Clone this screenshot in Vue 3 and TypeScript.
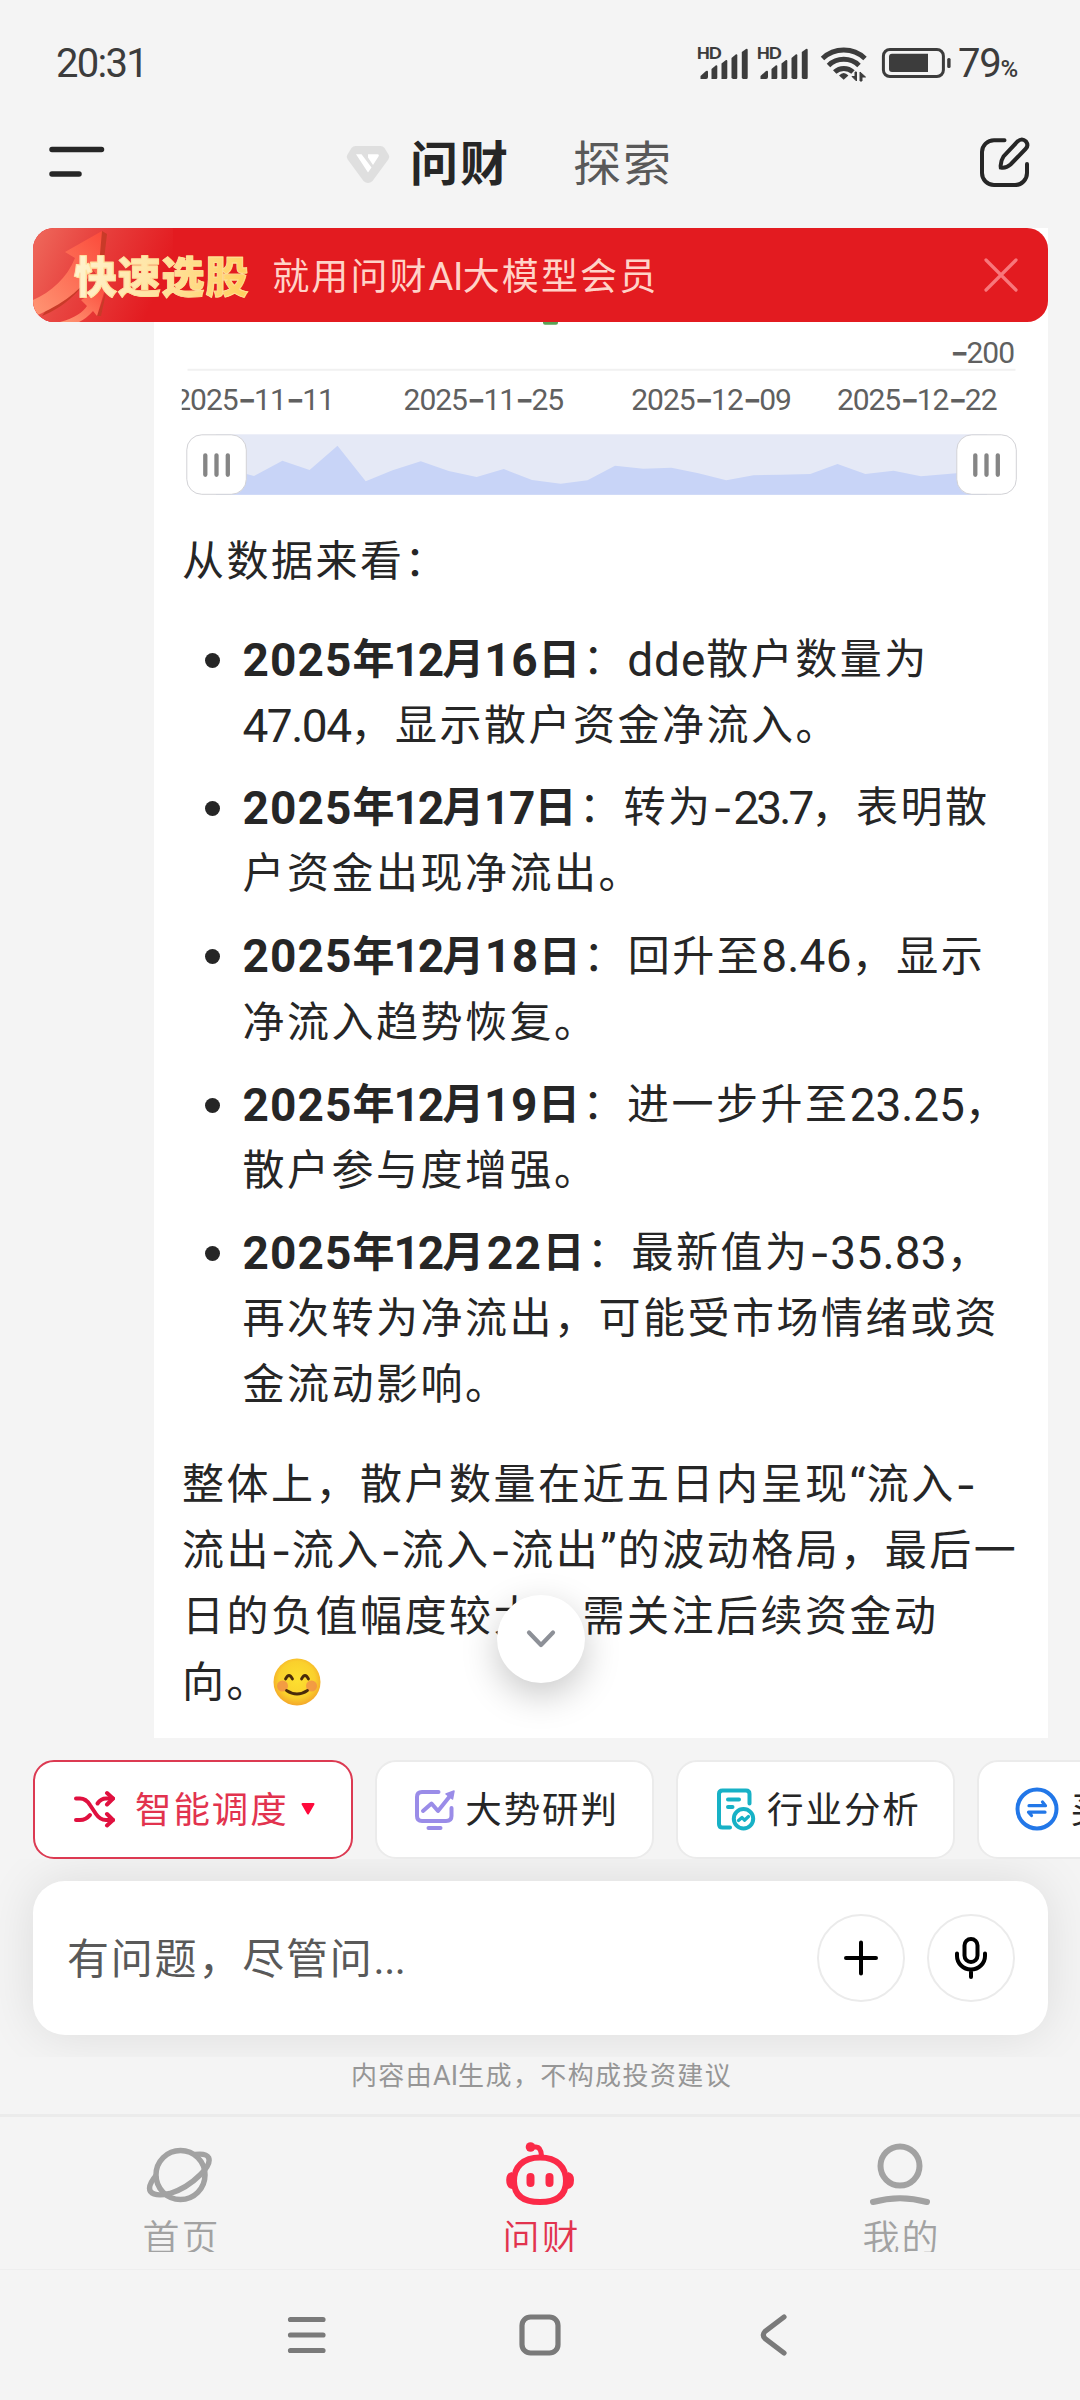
<script setup lang="ts">
type Kind = 'cjk' | 'lat' | 'dash' | 'quote'
interface Run { text: string; kind: Kind; spacing?: string; shift?: string }
interface Line { bold?: string; text: string }
interface Chip { label: string; icon: string; active?: boolean }

// Tracking and leading offset of individual latin runs, in px
const tracking: Record<string, [number, number]> = {
  '2025': [1.1, 0], '12': [-2, -3.6], '16': [0.6, -2.5], '17': [-1, -3], '18': [0.6, -2], '19': [0.6, -2.6], '22': [1.5, 0],
  '47.04': [-1.5, 0], '23.7': [-2.9, 0], '8.46': [0.2, 0], '23.25': [-0.1, 0], '35.83': [0.2, 0], dde: [0.9, 0],
}

function runs(source: string): Run[] {
  const parts = source.match(/[“”]|-|[0-9A-Za-z.]+|[^“”\-0-9A-Za-z.]+/g) ?? []
  return parts.map((text): Run => {
    if (text === '-') return { text, kind: 'dash' }
    if (text === '“' || text === '”') return { text, kind: 'quote' }
    if (/^[0-9A-Za-z.]+$/.test(text)) {
      const [spacing, shift] = tracking[text] ?? [0, 0]
      return { text, kind: 'lat', spacing: `${spacing}px`, shift: `${shift}px` }
    }
    return { text, kind: 'cjk' }
  })
}

const items: Line[][] = [
  [{ bold: '2025年12月16日', text: '：dde散户数量为' }, { text: '47.04，显示散户资金净流入。' }],
  [{ bold: '2025年12月17日', text: '：转为-23.7，表明散' }, { text: '户资金出现净流出。' }],
  [{ bold: '2025年12月18日', text: '：回升至8.46，显示' }, { text: '净流入趋势恢复。' }],
  [{ bold: '2025年12月19日', text: '：进一步升至23.25，' }, { text: '散户参与度增强。' }],
  [{ bold: '2025年12月22日', text: '：最新值为-35.83，' }, { text: '再次转为净流出，可能受市场情绪或资' }, { text: '金流动影响。' }],
]
const summary: string[] = [
  '整体上，散户数量在近五日内呈现“流入-',
  '流出-流入-流入-流出”的波动格局，最后一',
  '日的负值幅度较大，需关注后续资金动',
]

const dates = [
  { x: 20.3, parts: ['2025', '11', '11'] },
  { x: 249.6, parts: ['2025', '11', '25'] },
  { x: 477.3, parts: ['2025', '12', '09'] },
  { x: 682.9, parts: ['2025', '12', '22'] },
]
const trend: [number, number][] = [
  [62, 492], [92.5, 474], [100, 476], [128.4, 460.7], [155.6, 470], [183.5, 445.7], [211.7, 481.3], [238.6, 470.3],
  [266.8, 461.3], [294.7, 471], [322.6, 477], [349.8, 469], [378, 480], [406.7, 483.7], [433.5, 480.3], [461, 465.7],
  [489.3, 468.7], [517.5, 467.7], [544.4, 473.3], [572.3, 480.3], [599.5, 475.3], [627, 474.7], [656.3, 474],
  [683.5, 464], [711.4, 474], [739.6, 470.7], [766.9, 476.3], [802.3, 473.3], [833, 471],
]
const area = `62,266.7 ${trend.map(([x, y]) => `${x},${(y - 228).toFixed(1)}`).join(' ')} 833,266.7`

const chips: Chip[] = [
  { label: '智能调度', icon: 'shuffle', active: true },
  { label: '大势研判', icon: 'board' },
  { label: '行业分析', icon: 'report' },
  { label: '买', icon: 'swap' },
]
const signals = [0, 60]
</script>

<template>
  <div class="screen" lang="zh-CN">
    <header class="status">
      <span class="clock">20:31</span>
      <svg class="sys" width="256" height="44" viewBox="696 42 256 44" fill="#3c3c3c">
        <g v-for="dx in signals" :key="dx" :transform="`translate(${dx} 0)`">
          <text class="hd" x="696.8" y="59.3" textLength="25">HD</text>
          <path d="M700.5 79V76L706 71Q708 70 708 72V77Q708 79 706 79Z" />
          <path d="M711.5 79V69L716 65.200Q717.300 65 717.300 66.500V77.500Q717.300 79 716 79Z" />
          <path d="M721.500 79V63.500L726 60Q727.300 59.700 727.300 61V77.500Q727.300 79 726 79H723Z" />
          <path d="M731.500 78V58L736 54.200Q737.300 54 737.300 55.200V77.500Q737.300 79 736 79H733Z" />
          <path d="M741.800 78V52L746 48.900Q747.700 48.500 747.700 50V77.500Q747.700 79 746.500 79H743Z" />
        </g>
        <g fill="none" stroke="#3c3c3c" stroke-width="5">
          <path d="M822.500 58.500A31 31 0 0 1 865 58.500" />
          <path d="M828.500 65.500A22 22 0 0 1 859 65.500" />
          <path d="M834.700 72A13.500 13.500 0 0 1 853 72" />
        </g>
        <path d="M843.700 79.800L839 75.500Q843.700 70.500 848.400 75.500Z" />
        <path d="M856.500 72V81L852 76.500H855V72ZM860 81V72L865.500 77H862V81Z" stroke="#3c3c3c" />
        <rect x="883.400" y="49.500" width="60" height="27" rx="6.500" fill="none" stroke="#3c3c3c" stroke-width="3" />
        <path d="M892 53.700H928V72H892Q889 72 889 69V56.700Q889 53.700 892 53.700Z" />
        <rect x="947.200" y="58" width="3.400" height="10" rx="1.500" />
      </svg>
      <span class="level">79<small>%</small></span>
    </header>

    <nav class="top">
      <svg class="menu" width="56" height="32" viewBox="0 0 56 32" stroke="#262626" stroke-width="5.500" stroke-linecap="round"><path d="M3 3.500H52.500M3 28H30" /></svg>
      <div class="titles">
        <svg width="44" height="40" viewBox="0 0 44 40">
          <path d="M9.500 2H34.500Q37 2 38.500 4L42.500 10.500Q44 13 42.300 15.500L26.500 37Q22 41 17.500 37L1.700 15.500Q0 13 1.500 10.500L5.500 4Q7 2 9.500 2Z" fill="#dfdfdf" />
          <path d="M10 10.200H15.500L25.500 23.500L22 28.500ZM22 10.200H31.500Q33.500 10.200 32.500 12.500L27 21L22 13.500Z" fill="#fff" />
        </svg>
        <b>问财</b><span>探索</span>
      </div>
      <svg class="edit" width="52" height="52" viewBox="0 0 52 52" fill="none" stroke="#262626" stroke-width="4" stroke-linecap="round">
        <path d="M25.500 4.200H15A12 12 0 0 0 3 16V37A12 12 0 0 0 15 49H36A12 12 0 0 0 48 37V28" />
        <path d="M38.500 5.500Q43 1.500 47 5.500Q50 9.500 46.500 13L31.500 28.500Q27 32.500 21.800 31.500Q21 26 24.500 20.500Z" />
      </svg>
    </nav>

    <main class="chat">
      <div class="banner">
        <svg class="rise" width="140" height="94" viewBox="0 0 140 94">
          <defs>
            <linearGradient id="glow" x1="0" y1="0" x2="1" y2="0.300"><stop offset="0" stop-color="#ef6a5c" /><stop offset=".4" stop-color="#e84541" /><stop offset="1" stop-color="#e31b20" /></linearGradient>
            <linearGradient id="shaft" x1="1" y1="0" x2="0" y2="1"><stop offset="0" stop-color="#fb4b3b" /><stop offset="1" stop-color="#ff9775" /></linearGradient>
          </defs>
          <rect width="140" height="94" fill="url(#glow)" />
          <path d="M69 3L74 6L68 58L60 42C52 60 30 80 9 88Z" fill="#c93a28" />
          <path d="M69 3L32 24L42 30C34 50 18 64 0 72V88L7 86C34 74 52 58 60 42L65 49Z" fill="url(#shaft)" />
          <path d="M74 60L68 88L64 88Z" fill="#c93a28" />
          <path d="M27 94C42 90 50 84 54 78L48 72L73 58L64 88L60 83C56 88 50 92 46 94Z" fill="url(#shaft)" />
        </svg>
        <strong>快速选股</strong>
        <span class="pitch">就用问财<i>AI</i>大模型会员</span>
        <svg class="close" width="34" height="34" viewBox="0 0 34 34" stroke="#f8777b" stroke-width="3.200" stroke-linecap="round"><path d="M2 2L32 32M32 2L2 32" /></svg>
      </div>

      <article class="card">
        <svg class="chart" width="894" height="270" viewBox="0 0 894 270">
          <rect x="389" y="84" width="15" height="12.700" rx="2" fill="#5aa155" />
          <path d="M33.500 141.700H861.500" stroke="#f1f1f1" stroke-width="2" />
          <text class="tick" x="796" y="134.700"><tspan class="minus" dy="4">-</tspan><tspan dy="-4">200</tspan></text>
          <svg x="27.800" y="150" width="840" height="45" viewBox="27.800 150 840 45">
            <text v-for="d in dates" :key="d.x" class="tick" :x="d.x" y="182">{{ d.parts[0] }}<tspan class="minus" dy="4">-</tspan><tspan dy="-4">{{ d.parts[1] }}</tspan><tspan class="minus" dy="4">-</tspan><tspan dy="-4">{{ d.parts[2] }}</tspan></text>
          </svg>
          <rect x="62" y="206.300" width="771" height="60.500" fill="#e5e9f6" />
          <polygon :points="area" fill="#c8d4f7" />
          <g v-for="x in [32.800, 802.800]" :key="x" :transform="`translate(${x} 206.800)`">
            <rect width="59.500" height="59.500" rx="15" fill="#fff" stroke="#d2d2d6" />
            <path d="M18.500 20.500V40M29.700 20.500V40M41 20.500V40" stroke="#858585" stroke-width="4.300" stroke-linecap="round" />
          </g>
        </svg>

        <div class="answer">
          <p><span class="cjk">从数据来看：</span></p>
          <ul>
            <li v-for="(item, i) in items" :key="i">
              <div v-for="(line, j) in item" :key="j" class="line">
                <b v-if="line.bold"><span v-for="(r, k) in runs(line.bold)" :key="k" :class="r.kind" :style="{ letterSpacing: r.spacing, marginLeft: r.shift }">{{ r.text }}</span></b><span v-for="(r, k) in runs(line.text)" :key="k" :class="r.kind" :style="{ letterSpacing: r.spacing, marginLeft: r.shift }">{{ r.text }}</span>
              </div>
            </li>
          </ul>
          <div v-for="(line, j) in summary" :key="j" class="line"><span v-for="(r, k) in runs(line)" :key="k" :class="r.kind">{{ r.text }}</span></div>
          <div class="line last">
            <span class="cjk">向。</span>
            <svg width="48" height="48" viewBox="0 0 48 48" role="img" aria-label="😊">
              <defs><radialGradient id="face" cx=".5" cy=".45" r=".55"><stop offset="0" stop-color="#fde030" /><stop offset=".7" stop-color="#fad02c" /><stop offset="1" stop-color="#f4a72a" /></radialGradient></defs>
              <circle cx="24" cy="24" r="23.500" fill="url(#face)" />
              <circle cx="9.500" cy="28" r="5.500" fill="#f08a4b" opacity=".75" /><circle cx="38.500" cy="28" r="5.500" fill="#f08a4b" opacity=".75" />
              <g fill="none" stroke="#4a2b0a" stroke-width="2.800" stroke-linecap="round"><path d="M12.500 21Q16 14 19.500 21M28.500 21Q32 14 35.500 21" /><path d="M13.500 32.500Q24 39.500 34.500 32.500" /></g>
            </svg>
          </div>
        </div>
      </article>

      <button class="down"><svg width="32" height="22" viewBox="0 0 32 22" fill="none" stroke="#8d9097" stroke-width="4.200" stroke-linecap="round" stroke-linejoin="round"><path d="M4 4.500L16 17L28 4.500" /></svg></button>
    </main>

    <section class="chips">
      <div v-for="c in chips" :key="c.label" class="chip" :class="[c.icon, { active: c.active }]">
        <svg v-if="c.icon === 'shuffle'" width="42" height="40" viewBox="0 0 42 40" fill="none" stroke="#e0103f" stroke-width="4" stroke-linecap="round" stroke-linejoin="round">
          <path d="M3 9.500H7Q13 9.500 17 16L23 25Q27 31 33 31H40M3 31H7Q13 31 17 26M24.500 14.500Q28 9.500 33 9.500H40" /><path d="M34 4L40 9.500L34 15.500M34 25L40 31L34 36.500" />
        </svg>
        <svg v-else-if="c.icon === 'board'" width="42" height="42" viewBox="0 0 42 42" fill="none" stroke="#9a8ce8" stroke-width="4" stroke-linecap="round" stroke-linejoin="round">
          <path d="M24.500 4H8Q3 4 3 9V28Q3 33 8 33H32Q37.500 33 37.500 28V20" /><path d="M9 23L17.500 15.500L24 23L36 8" /><path d="M32 6L40 3L38.500 11Z" fill="#9a8ce8" stroke-width="1.500" /><path d="M14.500 40H26.500" />
        </svg>
        <svg v-else-if="c.icon === 'report'" width="40" height="44" viewBox="0 0 40 44" fill="none" stroke="#17b1c6" stroke-width="4" stroke-linecap="round" stroke-linejoin="round">
          <path d="M14 40.500H6.500Q3 40.500 3 37V7Q3 3.500 6.500 3.500H30Q33.500 3.500 33.500 7V16.500" /><path d="M12 12.500H23M12 20H16.500" /><circle cx="27.500" cy="31.700" r="9.700" /><path d="M22.500 33.500L26 30.500L28.500 33.200L32.500 29.500" stroke-width="3.300" />
        </svg>
        <svg v-else width="44" height="44" viewBox="0 0 44 44" fill="none" stroke="#2277e8" stroke-width="4" stroke-linecap="round">
          <circle cx="22" cy="22" r="19.500" /><path d="M14 18.700H30.500L27.500 15M30 25.200H13.500L16.500 28.500" stroke-width="3.200" stroke-linejoin="round" />
        </svg>
        <span>{{ c.label }}</span>
        <svg v-if="c.active" class="caret" width="14" height="12" viewBox="0 0 14 12"><path d="M1.500 1H12.500L7 10.500Z" fill="#ff0a3c" stroke="#ff0a3c" stroke-width="2" stroke-linejoin="round" /></svg>
      </div>
    </section>

    <section class="composer">
      <div class="box">
        <span class="hint">有问题，尽管问<i>...</i></span>
        <button class="round"><svg width="36" height="36" viewBox="0 0 36 36" stroke="#000" stroke-width="4" stroke-linecap="round"><path d="M18 2.500V33.500M3 18H33" /></svg></button>
        <button class="round"><svg width="36" height="44" viewBox="0 0 36 44" fill="none" stroke="#000" stroke-width="4" stroke-linecap="round"><rect x="11.500" y="3" width="13" height="23" rx="6.500" /><path d="M4 17.500V20A14 13.500 0 0 0 32 20V17.500M18 34V41" /></svg></button>
      </div>
    </section>
    <p class="note">内容由<i>AI</i>生成，不构成投资建议</p>

    <nav class="tabs">
      <div class="tab">
        <svg width="72" height="66" viewBox="0 0 72 66" fill="none" stroke="#a2a2a2" stroke-width="5.500"><circle cx="36.500" cy="34" r="24.500" /><path d="M51 13.500Q62 12 64.500 16.500Q67.500 23 56 34Q43 47 26 52.500Q11 56 6.500 50.500Q3 45 12.500 34" /></svg>
        <span>首页</span>
      </div>
      <div class="tab on">
        <svg width="72" height="66" viewBox="0 0 72 66" fill="none" stroke="#fb2a48" stroke-width="6">
          <path d="M36 16.500C53 16.500 62 26 62 40C62 54 53 61 36 61C19 61 10 54 10 40C10 26 19 16.500 36 16.500Z" /><path d="M28 6H32Q37 6 37.500 15" stroke-width="5" />
          <circle cx="26.500" cy="6" r="4.800" fill="#fb2a48" stroke="none" /><path d="M8 31Q2.200 32 2.200 39Q2.200 47 8 48ZM64 31Q70 32 70 39Q70 47 64 48Z" fill="#fb2a48" stroke="none" />
          <path d="M26.500 36V42M45.500 36V42" stroke-width="8" stroke-linecap="round" />
        </svg>
        <span>问财</span>
      </div>
      <div class="tab">
        <svg width="72" height="66" viewBox="0 0 72 66" fill="none" stroke="#a2a2a2" stroke-width="6" stroke-linecap="round"><circle cx="36" cy="25" r="19.500" /><path d="M9 61Q36 53.500 63 61" /></svg>
        <span>我的</span>
      </div>
    </nav>

    <footer class="system">
      <svg width="40" height="42" viewBox="0 0 40 42" stroke="#7a7a7a" stroke-width="5.200" stroke-linecap="round"><path d="M3.500 5.500H36M3.500 21H36M3.500 36.500H36" /></svg>
      <svg width="42" height="42" viewBox="0 0 42 42" fill="none" stroke="#7a7a7a" stroke-width="5.200"><rect x="3" y="3" width="36" height="36" rx="8.500" /></svg>
      <svg width="30" height="44" viewBox="0 0 30 44" fill="none" stroke="#7a7a7a" stroke-width="5.200" stroke-linecap="round"><path d="M25 4L6 18.500Q2.500 22 6 25.500L25 40" /></svg>
    </footer>
  </div>
</template>

<style>
body { background: #f4f4f4; }
</style>

<style scoped>
* { box-sizing: border-box; }
p, ul { margin: 0; padding: 0; list-style: none; }
button { border: 0; padding: 0; background: #fff; }
svg { flex: none; display: block; }
i { font-style: normal; font-family: Roboto, sans-serif; line-height: 0; }
.screen {
  width: 1080px; height: 2400px; overflow: hidden; background: #f4f4f4; color: #262626;
  display: flex; flex-direction: column;
  font-family: "Noto Sans CJK SC", sans-serif; text-spacing-trim: space-all;
}

.status { height: 84px; display: flex; align-items: flex-start; padding: 42px 0 0 56px; color: #3c3c3c; font-family: Roboto, sans-serif; }
.clock { width: 640px; font-size: 40px; line-height: 44px; letter-spacing: -1.700px; }
.hd { font: 900 17px Lato, sans-serif; }
.level { margin-left: 6px; font-size: 40px; line-height: 44px; letter-spacing: -1.200px; white-space: nowrap; }
.level small { font-size: 24px; font-weight: 500; }

.top { height: 144px; display: flex; align-items: center; padding: 12px 49px 0 49px; }
.titles { display: flex; align-items: center; margin: 0 auto 0 241px; font-size: 48px; line-height: 60px; letter-spacing: 2px; }
.titles svg { margin-top: 3px; }
.titles b { margin: -5px 0 0 20px; }
.titles span { margin: -5px 0 0 63px; color: #595959; }

.chat { position: relative; height: 1510px; display: flex; }
.banner {
  position: absolute; z-index: 1; left: 33px; top: 0; width: 1015px; height: 94px; border-radius: 21px; overflow: hidden;
  background: #e31b20; display: flex; align-items: center; padding-right: 30px;
}
.banner strong {
  margin: -3px 0 0 -99px; position: relative; font-size: 43px; line-height: 60px; font-weight: 900; letter-spacing: .800px; white-space: nowrap;
  background: linear-gradient(100deg, #fff4d0, #ffe3a0 50%, #ffcf5c); background-clip: text; color: transparent; -webkit-text-stroke: .800px #ffe09a;
}
.pitch { margin: -3px auto 0 23px; font-size: 37px; line-height: 60px; letter-spacing: 2.100px; color: #ffd3c8; white-space: nowrap; }
.pitch i { font-size: 38px; letter-spacing: -.500px; }

.card { width: 894px; height: 1510px; margin-left: 154px; background: #fff; overflow: hidden; }
.tick { font: 400 30px Roboto, sans-serif; fill: #606060; letter-spacing: -1.050px; }
.minus { font-family: Inter, sans-serif; font-size: 42px; font-weight: 400; letter-spacing: -2.800px; }
.answer { padding: 28.700px 0 0 28px; font-size: 42px; line-height: 66px; letter-spacing: 2.500px; white-space: nowrap; }
.answer p { height: 66px; }
.line { height: 66px; }
.cjk { line-height: 0; position: relative; top: -1.500px; }
.lat { font-family: Roboto, sans-serif; font-size: 46px; line-height: 0; }
.dash { font-family: Inter, sans-serif; font-size: 44px; line-height: 0; letter-spacing: .500px; }
.quote { font-family: Roboto, sans-serif; font-size: 46px; line-height: 0; letter-spacing: 1px; }
ul { margin: 32px 0 34px !important; }
li { position: relative; padding-left: 60.500px; }
li + li { margin-top: 16.300px; }
li::before { content: ""; position: absolute; left: 23px; top: 28px; width: 15px; height: 15px; border-radius: 50%; background: #262626; }
.last { display: flex; align-items: center; }
.last svg { margin: 2px 0 0 2px; }
.down {
  position: absolute; z-index: 1; left: 497px; top: 1367px; width: 88px; height: 88px; border-radius: 50%;
  display: flex; align-items: center; justify-content: center; box-shadow: 0 12px 36px rgba(0, 0, 0, .22);
}

.chips { height: 121px; padding: 22px 0 0 33px; display: flex; gap: 22.300px; overflow: hidden; }
.chip {
  flex: none; height: 98.700px; width: 278.500px; padding-left: 38px; border: 2px solid #ebebeb; border-radius: 21px; background: #fff;
  display: flex; align-items: center; font-size: 36.500px; letter-spacing: 1.900px; white-space: nowrap;
}
.chip span { margin: -2px 0 0 11px; line-height: 60px; }
.chip.board, .chip.swap { padding-left: 36.500px; }
.chip.board span { margin-left: 9.500px; }
.chip.active { width: 320px; border-color: #dc3a52; color: #e2334e; }
.chip.active span { margin-left: 20px; }
.caret { margin-left: 12px; }

.composer { height: 198px; padding: 21.700px 32px 0 33px; overflow: hidden; }
.box { height: 154.300px; border-radius: 32px; background: #fff; box-shadow: 0 0 50px rgba(0, 0, 0, .1); display: flex; align-items: center; padding-right: 33px; gap: 22px; }
.hint { margin: -4px auto 0 34px; font-size: 42px; letter-spacing: 1.800px; color: #595959; }
.hint i { font-size: 42px; letter-spacing: -.500px; }
.round { width: 88px; height: 88px; border-radius: 50%; border: 2px solid #ebebeb; display: flex; align-items: center; justify-content: center; }
.note { height: 57px; padding-left: 3px; text-align: center; font-size: 26px; line-height: 34px; letter-spacing: 1.400px; color: #969696; }
.note i { font-size: 27px; letter-spacing: 0; }

.tabs { height: 156px; border-top: 3px solid #ebebeb; border-bottom: 1px solid #eee; display: flex; }
.tab { width: 360px; height: 135px; overflow: hidden; padding-top: 24px; display: flex; flex-direction: column; align-items: center; color: #a2a2a2; font-size: 37px; line-height: 50px; letter-spacing: 2px; font-weight: 350; }
.tab span { margin: 4px 0 0 3px; }
.tab.on { color: #e2334e; }

.system { height: 130px; display: flex; align-items: flex-start; padding: 44px 0 0 286.500px; }
.system svg + svg { margin-left: 192px; }
.system svg:last-child { margin-left: 198px; margin-top: -1px; }
</style>
